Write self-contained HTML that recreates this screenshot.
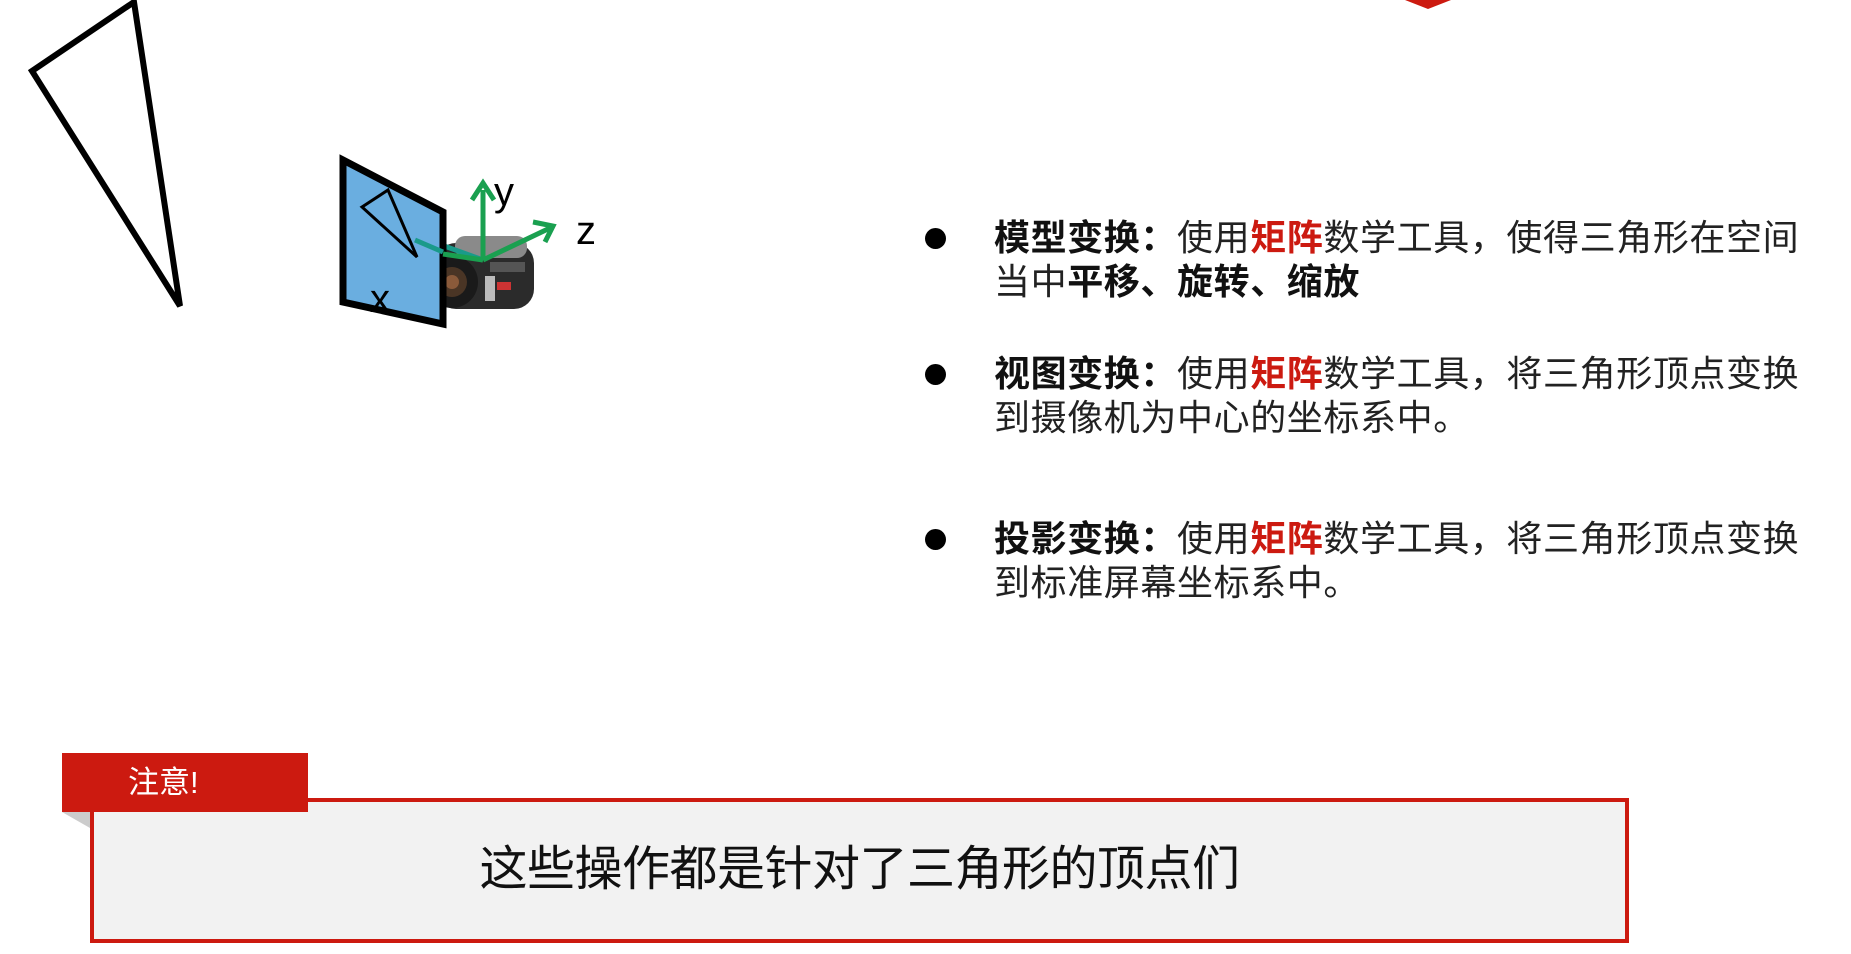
<!DOCTYPE html>
<html><head><meta charset="utf-8"><style>
html,body{margin:0;padding:0;background:#fff;}
body{width:1851px;height:954px;position:relative;overflow:hidden;font-family:"Liberation Sans","Noto Sans CJK SC",sans-serif;}
.bl{position:absolute;left:925px;width:21px;height:21px;border-radius:50%;background:#000;}
.tx{position:absolute;left:994px;font-size:36px;line-height:44px;color:#222;white-space:nowrap;letter-spacing:0.6px;}
.tx b{color:#111;}
.r{color:#cc1a10;font-weight:bold;}
</style></head><body>
<svg width="1851" height="954" style="position:absolute;left:0;top:0">
<polygon points="1405,0 1451,0 1428,9" fill="#cc1a10"/>
<polygon points="134,2 32,71 180,306" fill="none" stroke="#000" stroke-width="6" stroke-linejoin="miter"/>
<g>
<rect x="436" y="243" width="98" height="66" rx="20" fill="#2b2b2b"/>
<rect x="455" y="236" width="72" height="22" rx="10" fill="#8a8a8a"/>
<rect x="490" y="262" width="35" height="10" fill="#555"/>
<rect x="485" y="276" width="10" height="25" fill="#bbb"/>
<rect x="497" y="282" width="14" height="8" fill="#c33"/>
<circle cx="452" cy="282" r="26" fill="#1a1a1a"/>
<circle cx="452" cy="282" r="15" fill="#4a3525"/>
<circle cx="452" cy="282" r="7" fill="#8a5a3a"/>
</g>
<line x1="483" y1="260" x2="400" y2="230" stroke="#1a9a8a" stroke-width="5"/>
<polygon points="343,160 443,212 443,324 343,302" fill="#6aaee0" stroke="#000" stroke-width="7" stroke-linejoin="miter"/>
<polygon points="362,207 388,190 417,257" fill="none" stroke="#000" stroke-width="3"/>
<line x1="415" y1="240" x2="443" y2="252" stroke="#1a9a8a" stroke-width="5"/>
<line x1="443" y1="254" x2="483" y2="260" stroke="#1aa050" stroke-width="5"/>
<line x1="483" y1="260" x2="483" y2="190" stroke="#1aa050" stroke-width="5"/>
<polyline points="472,200 483,183 494,200" fill="none" stroke="#1aa050" stroke-width="5"/>
<line x1="483" y1="260" x2="550" y2="228" stroke="#1aa050" stroke-width="5"/>
<polyline points="533,222 553,226 545,242" fill="none" stroke="#1aa050" stroke-width="5"/>
<text x="494" y="205" font-family="Liberation Sans, sans-serif" font-size="40" fill="#000">y</text>
<text x="576" y="244" font-family="Liberation Sans, sans-serif" font-size="40" fill="#000">z</text>
<text x="370" y="312" font-family="Liberation Sans, sans-serif" font-size="40" fill="#000">x</text>
</svg>

<div class="bl" style="top:228px"></div>
<div class="tx" style="top:216px"><b>模型变换：</b>使用<span class="r">矩阵</span>数学工具，使得三角形在空间<br>当中<b>平移、旋转、缩放</b></div>
<div class="bl" style="top:364px"></div>
<div class="tx" style="top:352px"><b>视图变换：</b>使用<span class="r">矩阵</span>数学工具，将三角形顶点变换<br>到摄像机为中心的坐标系中。</div>
<div class="bl" style="top:529px"></div>
<div class="tx" style="top:517px"><b>投影变换：</b>使用<span class="r">矩阵</span>数学工具，将三角形顶点变换<br>到标准屏幕坐标系中。</div>

<div style="position:absolute;left:62px;top:812px;width:0;height:0;border-top:16px solid #ccc;border-left:28px solid transparent;"></div>
<div style="position:absolute;left:90px;top:798px;width:1531px;height:137px;background:#f2f2f2;border:4px solid #cc1a10;"></div>
<div style="position:absolute;left:62px;top:753px;width:246px;height:59px;background:#cc1a10;color:#fff;font-size:31px;line-height:59px;"><span style="margin-left:66px">注意!</span></div>
<div style="position:absolute;left:90px;top:840px;width:1539px;text-align:center;font-size:48px;line-height:60px;color:#111;letter-spacing:-0.5px;">这些操作都是针对了三角形的顶点们</div>
</body></html>
